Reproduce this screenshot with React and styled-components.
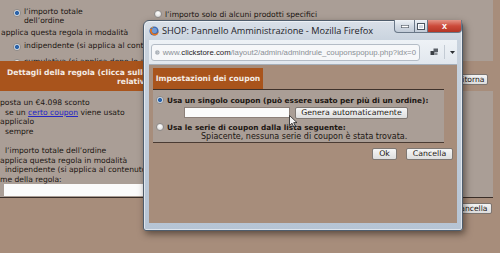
import React from 'react';
import styled, { createGlobalStyle, css } from 'styled-components';

const GlobalStyle = createGlobalStyle`
  html, body {
    margin: 0;
    padding: 0;
    background: #a78d7b;
  }
  body {
    font-family: 'DejaVu Sans', Verdana, sans-serif;
    font-size: 7.6px;
    color: #1c1612;
  }
`;

const Screen = styled.div`
  position: relative;
  width: 500px;
  height: 253px;
  overflow: hidden;
  background: #a78d7b;
`;

const Page = styled.div`
  display: flex;
  flex-direction: column;
  width: 500px;
`;

const TopPanel = styled.div`
  display: flex;
  width: 493px;
  height: 61px;
  box-sizing: border-box;
  padding-top: 8px;
  background: #aa9e96;
  overflow: hidden;
`;

const OptionCol = styled.div`
  display: flex;
  flex-direction: column;
  width: ${(p) => p.$width}px;
  padding-left: ${(p) => p.$pad || 0}px;
  box-sizing: border-box;
`;

const Option = styled.div`
  display: flex;
  align-items: flex-start;
  gap: 3px;
  line-height: 8.5px;
  margin-top: ${(p) => p.$gap || 0}px;
  white-space: nowrap;
`;

const Plain = styled.div`
  line-height: 9.6px;
  white-space: nowrap;
  margin-top: ${(p) => p.$gap || 0}px;
  padding-left: ${(p) => p.$indent || 0}px;
`;

const Radio = styled.span`
  flex: none;
  width: 6px;
  height: 6px;
  margin-top: 1px;
  border-radius: 50%;
  border: 1px solid #8d8a88;
  background: radial-gradient(circle at 50% 35%, #ffffff, #d4d4d4);
  ${(p) =>
    p.$checked &&
    css`
      background: radial-gradient(circle, #2c63a8 0 1.6px, #9fbbdb 2.2px, #eef1f4 2.8px, #cfd5dc);
    `}
`;

const HeaderRow = styled.div`
  display: flex;
  align-items: flex-start;
  height: 30px;
`;

const RuleHeader = styled.div`
  width: 440px;
  height: 30px;
  box-sizing: border-box;
  padding: 7px 7px 0;
  background: #a9541c;
  color: #f4ebe4;
  font-weight: bold;
  white-space: nowrap;
`;

const HeaderLine = styled.div`
  line-height: 9px;
  padding-left: ${(p) => p.$indent || 0}px;
`;

const PageButton = styled.button`
  margin: ${(p) => p.$top}px 0 0 ${(p) => p.$left}px;
  height: 11px;
  padding: 0 3px;
  border: 1px solid #7d7570;
  border-radius: 2px;
  background: linear-gradient(#f4f4f4, #dcdcdc);
  font-family: 'DejaVu Sans', Verdana, sans-serif;
  font-size: 7.6px;
  line-height: 9px;
  color: #1c1612;
`;

const DetailPanel = styled.div`
  width: 493px;
  box-sizing: border-box;
  padding: 7px 0 1px;
  background: #aa9e96;
  border-bottom: 1px solid #3a2e28;
`;

const Link = styled.a`
  color: #2626c4;
  text-decoration: underline;
`;

const PageInput = styled.div`
  width: 139px;
  height: 12px;
  margin: 0 0 0 4px;
  background: #fbfbfb;
`;

const BottomRow = styled.div`
  display: flex;
`;

/* popup window */
const Window = styled.div`
  position: absolute;
  left: 143px;
  top: 20px;
  width: 320px;
  height: 211px;
  box-sizing: border-box;
  display: flex;
  flex-direction: column;
  padding: 0 5px 7px 5px;
  border: 1px solid #4f5d6c;
  border-radius: 6px 6px 3px 3px;
  background: linear-gradient(#d9e0e8 0, #c9d3de 20px, #b6c4d4 100%);
  box-shadow: 2px 3px 7px rgba(30, 20, 15, 0.55), inset 0 0 0 1px rgba(255, 255, 255, 0.55);
`;

const TitleBar = styled.div`
  display: flex;
  align-items: flex-start;
  height: 19px;
`;

const Title = styled.div`
  margin: 4px 0 0 3px;
  font-family: 'Open Sans', 'Noto Sans', sans-serif;
  font-size: 9.2px;
  line-height: 11px;
  color: #1d2228;
  white-space: nowrap;
`;

const Controls = styled.div`
  display: flex;
  margin: -1px -5px 0 auto;
`;

const Ctrl = styled.div`
  display: flex;
  align-items: center;
  justify-content: center;
  flex: none;
  width: ${(p) => p.$w}px;
  height: 13px;
  box-sizing: border-box;
  border: 1px solid #6a7888;
  border-top: none;
  border-left-width: ${(p) => (p.$first ? 1 : 0)}px;
  border-radius: ${(p) => p.$radius || '0'};
  background: ${(p) =>
    p.$close
      ? 'linear-gradient(#e49486, #cc4a3a 50%, #b43526)'
      : 'linear-gradient(#eef2f6, #d3dbe4 50%, #c2ccd8)'};
  color: #fff;
  font-family: 'Liberation Sans', Arial, sans-serif;
  font-weight: bold;
  font-size: 9px;
  line-height: 9px;
`;

const Toolbar = styled.div`
  display: flex;
  align-items: center;
  height: 24px;
  padding: 0 2px;
  background: linear-gradient(#eef2f6, #e1e7ee);
  border-bottom: 1px solid #a5afba;
`;

const UrlBox = styled.div`
  display: flex;
  align-items: center;
  gap: 3px;
  width: 270px;
  height: 17px;
  box-sizing: border-box;
  padding: 0 3px;
  border: 1px solid #b4bcc6;
  border-radius: 3px;
  background: #f6f7f9;
  overflow: hidden;
  font-family: 'Liberation Sans', Arial, sans-serif;
  font-size: 7.8px;
  color: #8a8f95;
  white-space: nowrap;
`;

const Domain = styled.span`
  color: #1e2226;
`;

const ToolIcons = styled.div`
  display: flex;
  align-items: center;
  margin-left: 10px;
  gap: 5px;
`;

const Divider = styled.span`
  width: 1px;
  height: 14px;
  background: #c3cbd4;
`;

const Content = styled.div`
  flex: 1;
  display: flex;
  flex-direction: column;
  padding: 3px 4px 0 4px;
  background: #a78d7b;
`;

const Tab = styled.div`
  width: 110px;
  height: 21px;
  box-sizing: border-box;
  padding-top: 6px;
  background: #a9541c;
  color: #f4ebe4;
  font-weight: bold;
  text-align: center;
  line-height: 9px;
`;

const CouponPanel = styled.div`
  display: flex;
  flex-direction: column;
  width: 291px;
  height: 54px;
  box-sizing: border-box;
  padding: 5px 0 0 3px;
  background: #aa9e96;
  border-top: 1px solid #3f322b;
  border-bottom: 1px solid #4a3b33;
`;

const CouponOption = styled.div`
  display: flex;
  align-items: center;
  gap: 3px;
  height: 10px;
  font-size: 7.35px;
  font-weight: bold;
  white-space: nowrap;
  margin-top: ${(p) => p.$gap || 0}px;
`;

const CodeRow = styled.div`
  display: flex;
  gap: 5px;
  margin: 2px 0 0 28px;
`;

const CodeInput = styled.div`
  width: 106px;
  height: 11px;
  box-sizing: border-box;
  border: 1px solid #8c8079;
  background: #fbfbfb;
`;

const PopButton = styled.button`
  height: 12px;
  width: ${(p) => p.$w}px;
  padding: 0;
  border: 1px solid #7f7873;
  border-radius: 2px;
  background: linear-gradient(#f6f6f6, #dedede);
  font-family: 'DejaVu Sans', Verdana, sans-serif;
  font-size: 7.8px;
  line-height: 10px;
  color: #1c1612;
`;

const Note = styled.div`
  margin: 0 0 0 45px;
  font-size: 8px;
  line-height: 10px;
  white-space: nowrap;
`;

const ButtonRow = styled.div`
  display: flex;
  justify-content: flex-end;
  gap: 9px;
  margin-top: 5px;
`;

const Cursor = styled.svg`
  position: absolute;
  left: 289px;
  top: 115px;
`;

const FirefoxIcon = () => (
  <svg width="10" height="10" viewBox="0 0 10 10" style={{ marginTop: 5, flex: 'none' }}>
    <circle cx="5" cy="5" r="4.6" fill="#3d68b0" />
    <circle cx="5.4" cy="4.4" r="2.6" fill="#6f9ad6" />
    <path d="M1 3.2 C0.4 6.5 3 9.8 6.4 9.4 C8.6 9 9.8 7 9.6 5.2 C8.8 7.4 6.4 8.4 4.4 7.4 C2.6 6.4 2.4 4.4 3.2 3 C2.2 3 1.4 2.6 1 3.2 Z" fill="#e4741f" />
    <path d="M2 1.8 C2.8 0.8 4 0.6 4.6 1 C3.8 1.2 3.4 1.8 3.2 2.4 Z" fill="#f0a03a" />
  </svg>
);

const GlobeIcon = () => (
  <svg width="9" height="9" viewBox="0 0 10 10">
    <circle cx="5" cy="5" r="4.4" fill="#c9ced4" stroke="#8e959d" strokeWidth="0.8" />
    <path d="M3 2.4 C4 3 4.4 4 3.6 5 C2.8 5.6 3.2 7 4.2 7.8 M6.4 1.6 C6 2.6 7.2 3.2 8 3.4 M6.2 5.4 C7 6 7.2 7 6.6 8" stroke="#7b828a" strokeWidth="1" fill="none" />
  </svg>
);

const AddonIcon = () => (
  <svg width="9" height="8" viewBox="0 0 9 8">
    <rect x="0.5" y="3" width="4" height="4" fill="#3a3f45" />
    <rect x="3.5" y="0.5" width="4.5" height="3.5" fill="#5b6168" />
    <rect x="4.5" y="4.5" width="3" height="2.5" fill="#8a9096" />
  </svg>
);

const App = () => {
  return (
    <Screen>
      <GlobalStyle />
      <Page>
        <TopPanel>
          <OptionCol $width={154} $pad={13}>
            <Option>
              <Radio $checked />
              <span>
                l’importo totale
                <br />
                dell’ordine
              </span>
            </Option>
            <Plain $gap={3} style={{ marginLeft: -12 }}>
              applica questa regola in modalità
            </Plain>
            <Option $gap={4}>
              <Radio $checked />
              <span>indipendente (si applica al contenuto del carrello)</span>
            </Option>
            <Option $gap={7}>
              <Radio />
              <span>cumulativa (si applica dopo le altre regole)</span>
            </Option>
          </OptionCol>
          <OptionCol $width={300}>
            <Option style={{ marginTop: 1 }}>
              <Radio />
              <span style={{ marginTop: 2 }}>l’importo solo di alcuni prodotti specifici</span>
            </Option>
          </OptionCol>
        </TopPanel>

        <HeaderRow>
          <RuleHeader>
            <HeaderLine>Dettagli della regola (clicca sulle voci sottolineate per modificare le</HeaderLine>
            <HeaderLine $indent={110}>relative impostazioni)</HeaderLine>
          </RuleHeader>
          <PageButton $top={13} $left={13}>
            Ritorna
          </PageButton>
        </HeaderRow>

        <DetailPanel>
          <Plain>posta un €4.098 sconto</Plain>
          <Plain $indent={5}>
            se un <Link>certo coupon</Link> viene usato
          </Plain>
          <Plain>applicalo</Plain>
          <Plain $indent={5}>sempre</Plain>
          <Plain>&nbsp;</Plain>
          <Plain $indent={5}>l’importo totale dell’ordine</Plain>
          <Plain>applica questa regola in modalità</Plain>
          <Plain $indent={5}>indipendente (si applica al contenuto del carrello)</Plain>
          <Plain>me della regola:</Plain>
          <PageInput />
        </DetailPanel>

        <BottomRow>
          <PageButton $top={5} $left={451}>
            Cancella
          </PageButton>
        </BottomRow>
      </Page>

      <Window>
        <TitleBar>
          <FirefoxIcon />
          <Title>SHOP: Pannello Amministrazione - Mozilla Firefox</Title>
          <Controls>
            <Ctrl $w={21} $first $radius="0 0 0 4px">
              <svg width="8" height="3">
                <rect x="0.3" y="0.3" width="7.4" height="2.4" fill="#fff" stroke="#4b5560" strokeWidth="0.6" />
              </svg>
            </Ctrl>
            <Ctrl $w={13}>
              <svg width="8" height="7">
                <rect x="0.5" y="0.5" width="7" height="6" fill="none" stroke="#4b5560" strokeWidth="1" />
                <rect x="1.5" y="1.5" width="5" height="4" fill="none" stroke="#fff" strokeWidth="1" />
              </svg>
            </Ctrl>
            <Ctrl $w={34} $close $radius="0 0 4px 0">
              x
            </Ctrl>
          </Controls>
        </TitleBar>

        <Toolbar>
          <UrlBox>
            <GlobeIcon />
            <span>
              www.<Domain>clickstore.com</Domain>/layout2/admin/admindrule_couponspopup.php?idx=0
            </span>
          </UrlBox>
          <ToolIcons>
            <AddonIcon />
            <Divider />
            <svg width="5" height="3">
              <path d="M0 0 H5 L2.5 3 Z" fill="#2b2f33" />
            </svg>
          </ToolIcons>
        </Toolbar>

        <Content>
          <Tab>Impostazioni dei coupon</Tab>
          <CouponPanel>
            <CouponOption>
              <Radio $checked style={{ marginTop: 0 }} />
              <span>Usa un singolo coupon (può essere usato per più di un ordine):</span>
            </CouponOption>
            <CodeRow>
              <CodeInput />
              <PopButton $w={113}>Genera automaticamente</PopButton>
            </CodeRow>
            <CouponOption $gap={3}>
              <Radio style={{ marginTop: 0 }} />
              <span>Usa le serie di coupon dalla lista seguente:</span>
            </CouponOption>
            <Note>Spiacente, nessuna serie di coupon è stata trovata.</Note>
          </CouponPanel>
          <ButtonRow>
            <PopButton $w={25}>Ok</PopButton>
            <PopButton $w={47}>Cancella</PopButton>
          </ButtonRow>
        </Content>
      </Window>

      <Cursor width="9" height="13" viewBox="0 0 9 13">
        <path d="M0.5 0.5 V10.5 L3 8.2 L4.8 12 L6.4 11.3 L4.7 7.6 H8 Z" fill="#f2f2f2" stroke="#222" strokeWidth="0.8" />
      </Cursor>
    </Screen>
  );
};

export default App;
